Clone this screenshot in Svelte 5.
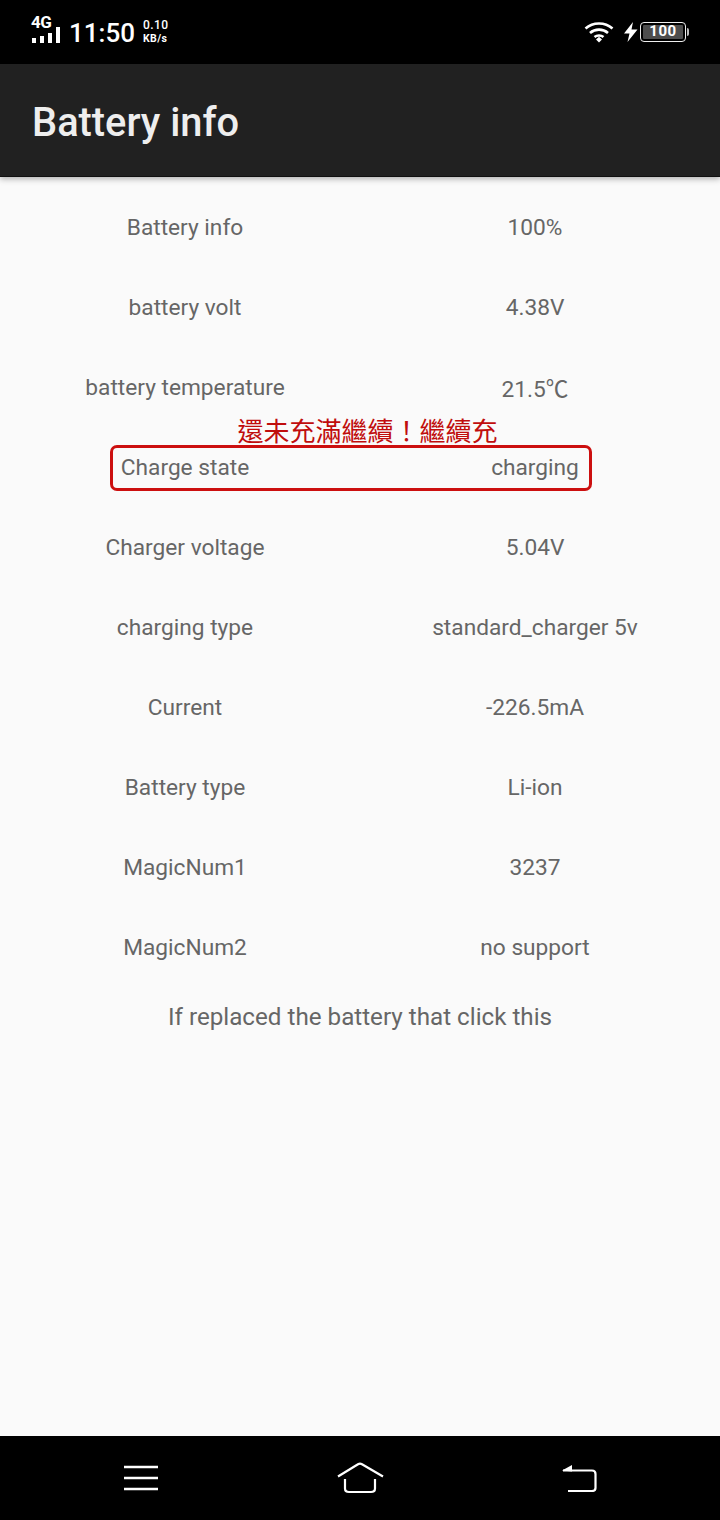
<script>
  const rows = [
    ['Battery info', '100%'],
    ['battery volt', '4.38V'],
    ['battery temperature', '21.5℃'],
    ['Charge state', 'charging'],
    ['Charger voltage', '5.04V'],
    ['charging type', 'standard_charger 5v'],
    ['Current', '-226.5mA'],
    ['Battery type', 'Li-ion'],
    ['MagicNum1', '3237'],
    ['MagicNum2', 'no support']
  ];
</script>

<div class="screen">
  <div class="statusbar">
    <div class="status-left">
      <div class="signal">
        <span class="net">4G</span>
        <svg width="30" height="16" viewBox="0 0 30 16" fill="#fff">
          <rect x="1" y="11" width="4" height="5" />
          <rect x="9" y="9" width="4" height="7" />
          <rect x="17" y="6" width="4" height="10" />
          <rect x="25" y="0" width="4" height="16" />
        </svg>
      </div>
      <span class="clock">11:50</span>
      <div class="speed"><span>0.10</span><span class="unit">KB/s</span></div>
    </div>
    <div class="status-right">
      <svg class="wifi" width="30" height="22" viewBox="0 0 30 22" fill="none" stroke="#fff" stroke-width="2.6">
        <path d="M1.5 7.5C9 .8 21 .8 28.5 7.5" />
        <path d="M6 12C11 7.5 19 7.5 24 12" />
        <path d="M10.5 16C13 14 17 14 19.5 16" />
        <path d="M12 18.500L15 15.800L18 18.500L15 21.500Z" fill="#fff" stroke="none" />
      </svg>
      <svg class="bolt" width="14" height="20" viewBox="0 0 14 20" fill="#fff">
        <path d="M9 0L0 11.500H5.500L3.500 20L13.500 7.500H7.500Z" />
      </svg>
      <div class="battery">
        <div class="cell"><span>100</span></div>
        <div class="nub"></div>
      </div>
    </div>
  </div>

  <header class="appbar"><h1>Battery info</h1></header>

  <main class="content">
    <div class="table">
      {#each rows as row}
        <div class="row">
          <span>{row[0]}</span>
          <span>{row[1]}</span>
        </div>
      {/each}
      <!-- red annotation drawn over the screenshot -->
      <div class="note">還未充滿繼續！繼續充</div>
      <div class="mark"></div>
    </div>
    <p class="replace">If replaced the battery that click this</p>
  </main>

  <nav class="navbar">
    <svg width="36" height="28" viewBox="0 0 36 28" stroke="#fff" stroke-width="2.4" fill="none">
      <path d="M1 3H35M1 14H35M1 25H35" />
    </svg>
    <svg width="50" height="32" viewBox="0 0 50 32" stroke="#fff" stroke-width="2.2" fill="none">
      <path d="M3 14.500L23 2.200Q25 1 27 2.200L48 14.500" />
      <path d="M10 17V26.500Q10 30 14 30H36Q40 30 40 26.500V17" />
    </svg>
    <svg width="36" height="28" viewBox="0 0 36 28" fill="none">
      <path d="M2 6.500H31Q34.500 6.500 34.500 10V24Q34.500 27 31 27H7" stroke="#fff" stroke-width="2.2" />
      <path d="M1 6.500L11 1V7.500Z" fill="#fff" />
    </svg>
  </nav>
</div>

<style>
  :global(body) {
    margin: 0;
    background: #fafafa;
  }

  .screen {
    width: 720px;
    height: 1520px;
    display: flex;
    flex-direction: column;
    font-family: Roboto, "Liberation Sans", "Noto Sans CJK TC", sans-serif;
    background: #fafafa;
    overflow: hidden;
  }

  .statusbar {
    height: 64px;
    flex: none;
    background: #000;
    color: #fff;
    display: flex;
    align-items: center;
    justify-content: space-between;
    padding: 0 31px 0 32px;
    box-sizing: border-box;
  }

  .status-left,
  .status-right {
    display: flex;
    align-items: center;
  }

  .signal {
    width: 30px;
    height: 26px;
    position: relative;
    margin-top: -4px;
  }

  .signal svg {
    position: absolute;
    left: -1px;
    top: 10px;
  }

  .net {
    position: absolute;
    left: -1px;
    top: -3px;
    font-size: 17px;
    font-weight: 700;
    line-height: 16px;
    letter-spacing: -0.5px;
  }

  .clock {
    font-size: 26px;
    font-weight: 500;
    margin-left: 7px;
    line-height: 32px;
    margin-top: 2px;
  }

  .speed {
    display: flex;
    flex-direction: column;
    font-size: 12px;
    font-weight: 500;
    line-height: 13px;
    margin-left: 8px;
    letter-spacing: 0.4px;
  }

  .unit {
    font-size: 10.5px;
    font-weight: 700;
  }

  .wifi {
    margin-right: 10px;
  }

  .bolt {
    margin-right: 2px;
  }

  .battery {
    display: flex;
    align-items: center;
  }

  .cell {
    width: 46px;
    height: 20px;
    box-sizing: border-box;
    border: 1.5px solid #eee;
    border-radius: 4px;
    padding: 2px;
    display: flex;
  }

  .cell span {
    flex: 1;
    background: #4d4d4d;
    border-radius: 1px;
    color: #fff;
    font-size: 15px;
    font-weight: 700;
    line-height: 13px;
    text-align: center;
    letter-spacing: 0.6px;
  }

  .nub {
    width: 2px;
    height: 8px;
    margin-left: 1px;
    background: #bbb;
    border-radius: 0 2px 2px 0;
  }

  .appbar {
    height: 112px;
    flex: none;
    box-sizing: border-box;
    background: #212121;
    display: flex;
    align-items: center;
    padding: 5px 0 0 32px;
    box-shadow: 0 1px 0 #111, 0 3px 6px rgba(0, 0, 0, 0.3);
    position: relative;
  }

  h1 {
    margin: 0;
    color: #eee;
    font-size: 39.8px;
    font-weight: 500;
    line-height: 48px;
  }

  .content {
    flex: 1;
    padding-top: 11px;
    color: #666;
    font-size: 22.7px;
  }

  .table {
    position: relative;
  }

  .row {
    height: 80px;
    display: grid;
    grid-template-columns: 330px 330px;
    column-gap: 20px;
    padding: 0 20px;
    align-items: center;
    text-align: center;
  }

  .note {
    position: absolute;
    left: 0;
    right: 0;
    top: 227px;
    text-align: center;
    color: #c00d0d;
    font-family: "Noto Sans CJK TC", sans-serif;
    font-size: 26px;
    line-height: 32px;
    padding-left: 15px;
    box-sizing: border-box;
  }

  .mark {
    position: absolute;
    left: 110px;
    top: 258px;
    width: 482px;
    height: 46px;
    box-sizing: border-box;
    border: 3px solid #cc0f0f;
    border-radius: 7px;
  }

  .replace {
    margin: 0;
    text-align: center;
    font-size: 24.2px;
    line-height: 32px;
    padding-top: 14px;
  }

  .navbar {
    height: 84px;
    flex: none;
    background: #000;
    display: flex;
    align-items: center;
    justify-content: space-between;
    padding: 0 123px;
    box-sizing: border-box;
  }
</style>
